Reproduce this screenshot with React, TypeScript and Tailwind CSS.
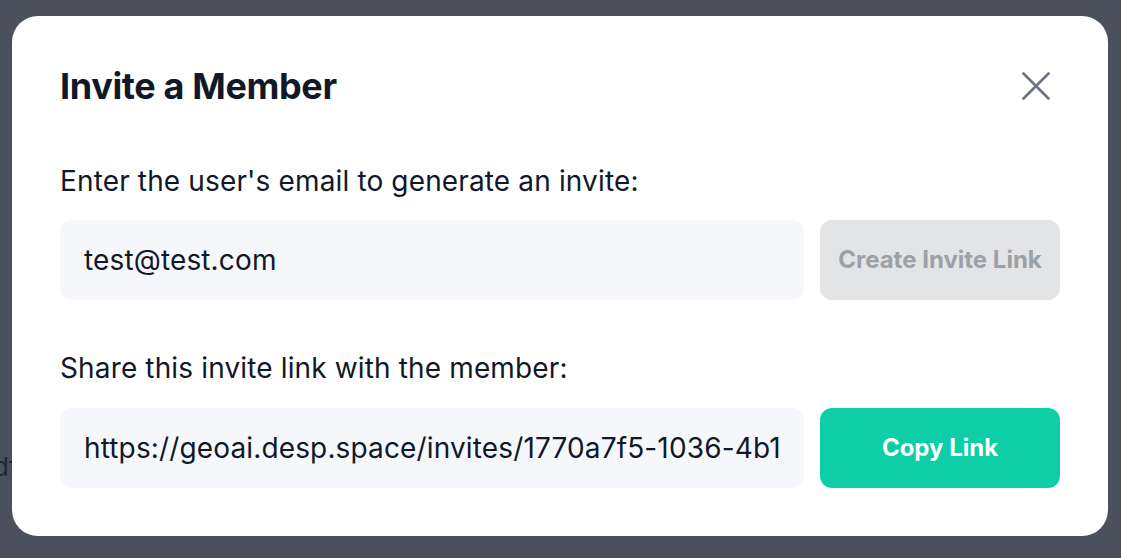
import { useState } from "react";

function CloseIcon() {
  return (
    <svg width="28" height="28" viewBox="0 0 28 28" fill="none" stroke="currentColor" strokeWidth="2.6" strokeLinecap="round">
      <path d="M1.5 1.5L26.5 26.5" />
      <path d="M26.5 1.5L1.5 26.5" />
    </svg>
  );
}

export default function App() {
  const [email, setEmail] = useState("test@test.com");
  const inviteLink = "https://geoai.desp.space/invites/1770a7f5-1036-4b1e-9c2a-5f8d3e7b6a01";

  return (
    <div className="relative w-full h-[558px] bg-[#4b515c] overflow-hidden font-['Inter',sans-serif] text-[#111827]">
      {/* page behind the overlay */}
      <span className="absolute left-[-7px] top-[449px] text-[26px] leading-[36px] text-[#23272f]">df</span>

      <div className="absolute left-[12px] top-[16px] w-[1096px] h-[520px] rounded-[26px] bg-white px-12 pt-12 pb-12">
        <div className="flex items-center justify-between h-[44px]">
          <h2 className="text-[36px] leading-[44px] font-bold tracking-[-0.01em]">Invite a Member</h2>
          <button className="w-12 h-12 flex items-center justify-center text-[#6b7280]">
            <CloseIcon />
          </button>
        </div>

        <p className="mt-[55px] text-[28px] leading-[36px] tracking-[0.005em]">Enter the user's email to generate an invite:</p>
        <div className="mt-[21px] flex gap-4">
          <input
            value={email}
            onChange={(e) => setEmail(e.target.value)}
            className="flex-1 h-20 rounded-[12px] bg-[#f6f7fb] px-6 text-[28px] tracking-[0.005em] outline-none"
          />
          <button
            disabled
            className="w-[240px] h-20 rounded-[12px] bg-[#e3e4e6] text-[#9ca0a7] text-[24px] font-bold"
          >
            Create Invite Link
          </button>
        </div>

        <p className="mt-[50px] text-[28px] leading-[36px] tracking-[0.005em]">Share this invite link with the member:</p>
        <div className="mt-[22px] flex gap-4">
          <input
            readOnly
            value={inviteLink}
            className="flex-1 h-20 rounded-[12px] bg-[#f6f7fb] px-6 text-[28px] tracking-[0.005em] outline-none"
          />
          <button className="w-[240px] h-20 rounded-[12px] bg-[#0dcea7] text-white text-[24px] font-bold">
            Copy Link
          </button>
        </div>
      </div>
    </div>
  );
}
